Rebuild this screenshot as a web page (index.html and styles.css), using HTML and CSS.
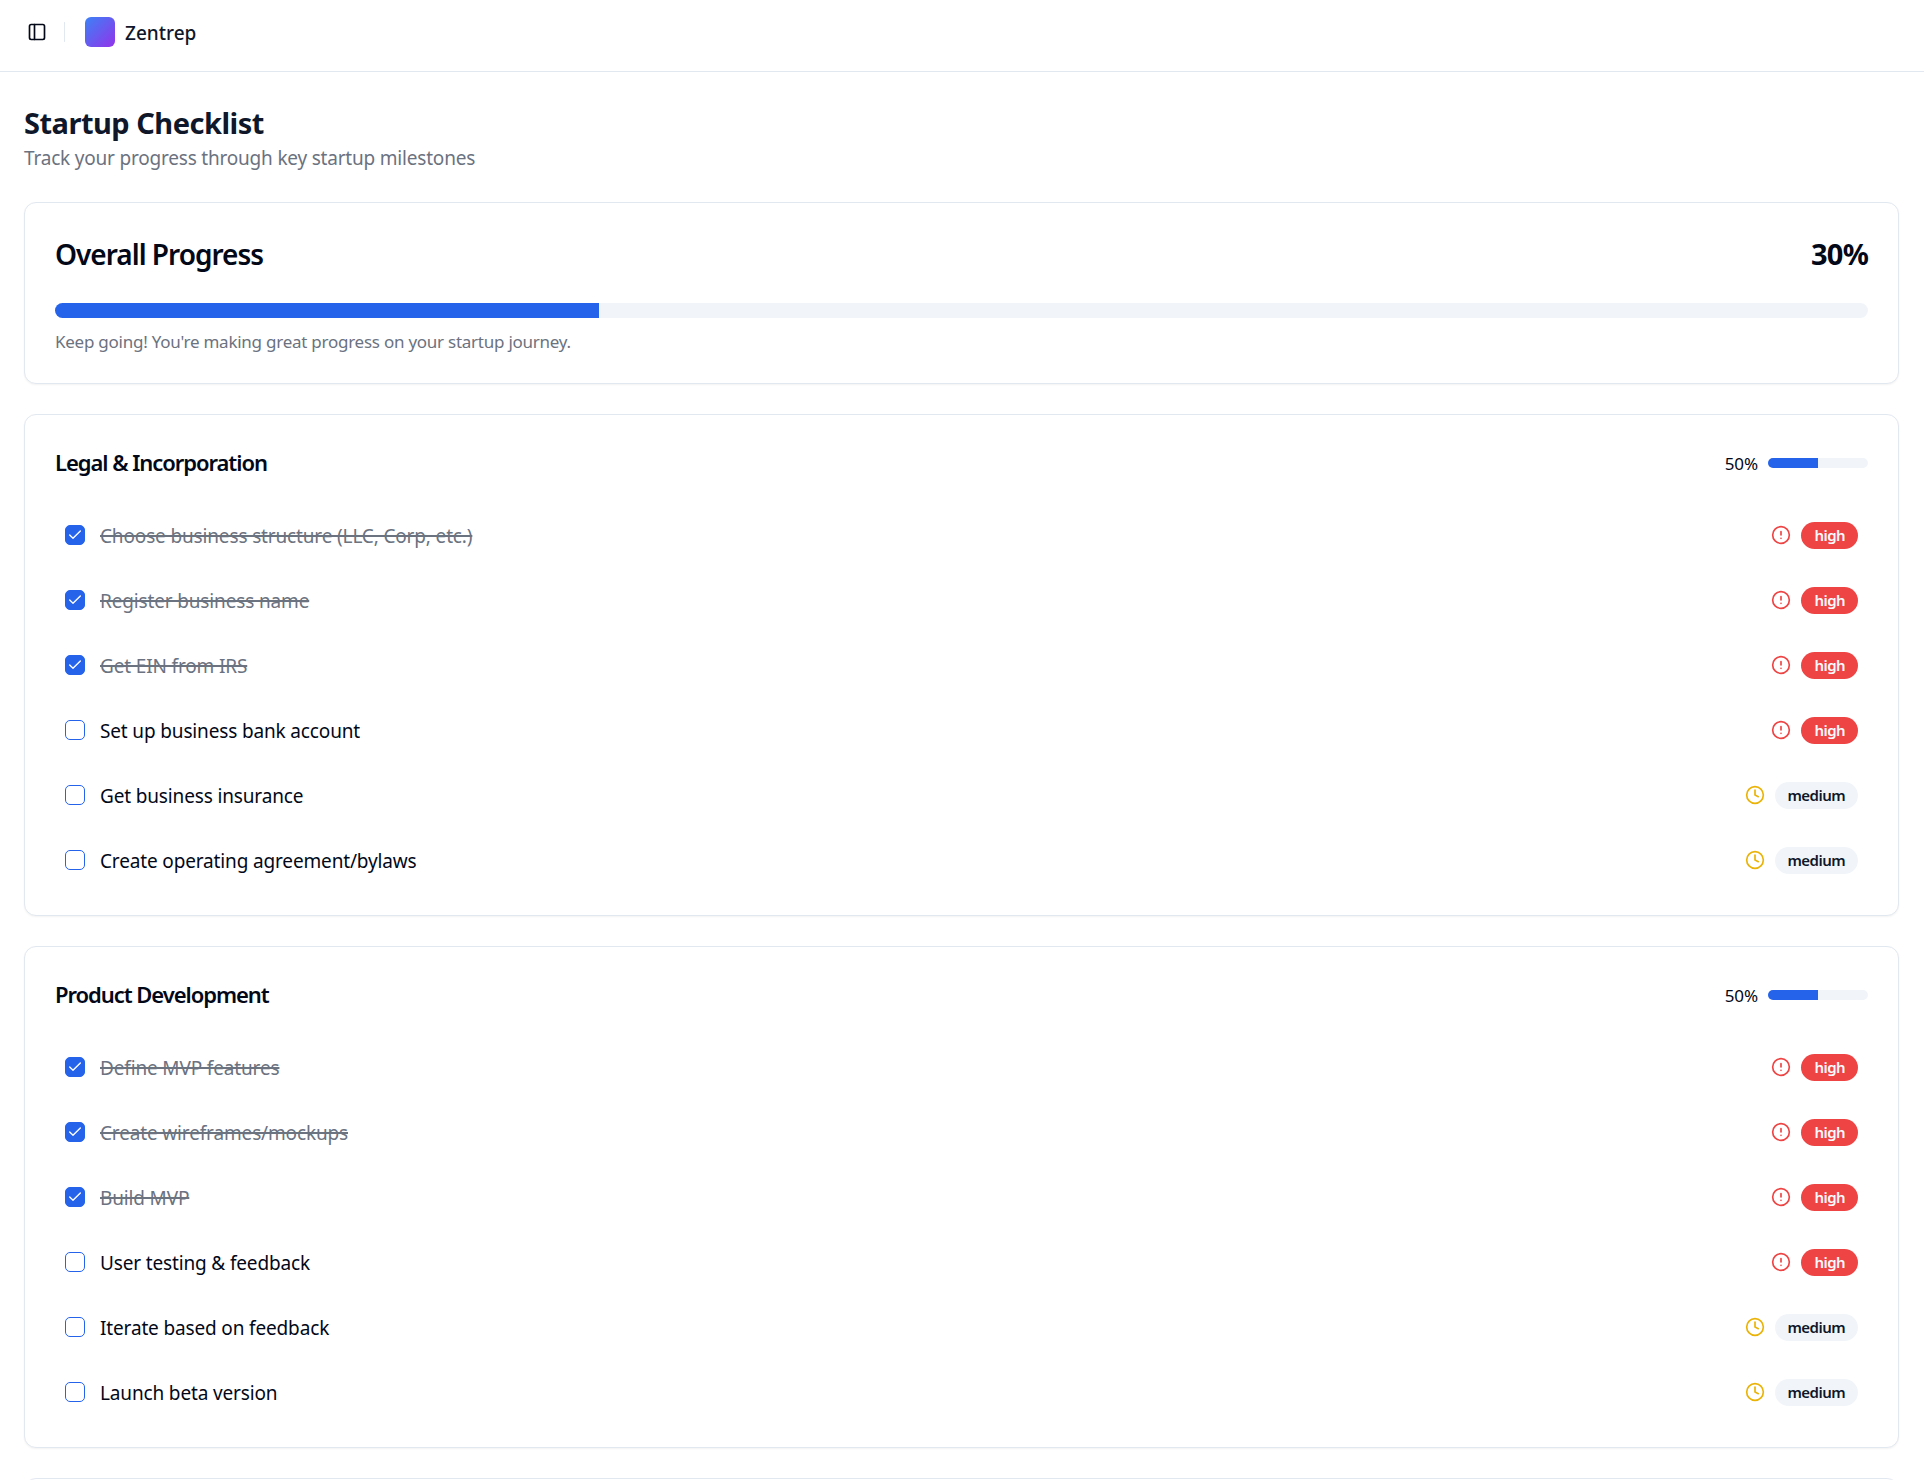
FILE: index.html
```html
<!DOCTYPE html>
<html lang="en">
<head>
  <meta charset="UTF-8" />
  <title>Zentrep - Startup Checklist</title>
  <meta name="viewport" content="width=device-width, initial-scale=1.0" />
  <link rel="stylesheet" href="styles.css">
</head>
<body>

<svg class="sprites" width="0" height="0" aria-hidden="true">
  <symbol id="icon-alert" viewBox="0 0 24 24"><circle cx="12" cy="12" r="10"/><line x1="12" y1="8" x2="12" y2="12"/><line x1="12" y1="16" x2="12.01" y2="16"/></symbol>
  <symbol id="icon-clock" viewBox="0 0 24 24"><circle cx="12" cy="12" r="10"/><polyline points="12 6 12 12 16 14"/></symbol>
  <symbol id="icon-check" viewBox="0 0 24 24"><path d="M20 6 9 17l-5-5"/></symbol>
</svg>

<header class="topbar">
  <button class="panel-toggle" aria-label="Toggle sidebar">
    <svg class="icon" viewBox="0 0 24 24"><rect x="3" y="3" width="18" height="18" rx="2"/><path d="M9 3v18"/></svg>
  </button>
  <span class="topbar-sep"></span>
  <span class="logo"></span>
  <span class="brand">Zentrep</span>
</header>

<main>
  <h1>Startup Checklist</h1>
  <p class="subtitle">Track your progress through key startup milestones</p>

  <section class="card overall">
    <div class="overall-head">
      <h2>Overall Progress</h2>
      <span class="overall-value">30%</span>
    </div>
    <div class="bar bar-large"><div class="bar-fill" style="width:30%"></div></div>
    <p class="overall-note">Keep going! You're making great progress on your startup journey.</p>
  </section>

  <section class="card">
    <div class="group-head">
      <h3>Legal &amp; Incorporation</h3>
      <div class="group-progress">
        <span>50%</span>
        <div class="bar bar-small"><div class="bar-fill" style="width:50%"></div></div>
      </div>
    </div>
    <ul class="tasks">
      <li class="task done"><span class="checkbox"><svg viewBox="0 0 24 24"><use href="#icon-check"/></svg></span><span class="task-name">Choose business structure (LLC, Corp, etc.)</span><svg class="priority-icon red"><use href="#icon-alert"/></svg><span class="pill high">high</span></li>
      <li class="task done"><span class="checkbox"><svg viewBox="0 0 24 24"><use href="#icon-check"/></svg></span><span class="task-name">Register business name</span><svg class="priority-icon red"><use href="#icon-alert"/></svg><span class="pill high">high</span></li>
      <li class="task done"><span class="checkbox"><svg viewBox="0 0 24 24"><use href="#icon-check"/></svg></span><span class="task-name">Get EIN from IRS</span><svg class="priority-icon red"><use href="#icon-alert"/></svg><span class="pill high">high</span></li>
      <li class="task"><span class="checkbox"></span><span class="task-name">Set up business bank account</span><svg class="priority-icon red"><use href="#icon-alert"/></svg><span class="pill high">high</span></li>
      <li class="task"><span class="checkbox"></span><span class="task-name">Get business insurance</span><svg class="priority-icon amber"><use href="#icon-clock"/></svg><span class="pill medium">medium</span></li>
      <li class="task"><span class="checkbox"></span><span class="task-name">Create operating agreement/bylaws</span><svg class="priority-icon amber"><use href="#icon-clock"/></svg><span class="pill medium">medium</span></li>
    </ul>
  </section>

  <section class="card">
    <div class="group-head">
      <h3>Product Development</h3>
      <div class="group-progress">
        <span>50%</span>
        <div class="bar bar-small"><div class="bar-fill" style="width:50%"></div></div>
      </div>
    </div>
    <ul class="tasks">
      <li class="task done"><span class="checkbox"><svg viewBox="0 0 24 24"><use href="#icon-check"/></svg></span><span class="task-name">Define MVP features</span><svg class="priority-icon red"><use href="#icon-alert"/></svg><span class="pill high">high</span></li>
      <li class="task done"><span class="checkbox"><svg viewBox="0 0 24 24"><use href="#icon-check"/></svg></span><span class="task-name">Create wireframes/mockups</span><svg class="priority-icon red"><use href="#icon-alert"/></svg><span class="pill high">high</span></li>
      <li class="task done"><span class="checkbox"><svg viewBox="0 0 24 24"><use href="#icon-check"/></svg></span><span class="task-name">Build MVP</span><svg class="priority-icon red"><use href="#icon-alert"/></svg><span class="pill high">high</span></li>
      <li class="task"><span class="checkbox"></span><span class="task-name">User testing &amp; feedback</span><svg class="priority-icon red"><use href="#icon-alert"/></svg><span class="pill high">high</span></li>
      <li class="task"><span class="checkbox"></span><span class="task-name">Iterate based on feedback</span><svg class="priority-icon amber"><use href="#icon-clock"/></svg><span class="pill medium">medium</span></li>
      <li class="task"><span class="checkbox"></span><span class="task-name">Launch beta version</span><svg class="priority-icon amber"><use href="#icon-clock"/></svg><span class="pill medium">medium</span></li>
    </ul>
  </section>

  <section class="card next-card"></section>
</main>

</body>
</html>
```

FILE: styles.css
```css
html, body {
  height: 1480px;
  overflow: hidden;
}
body {
  margin: 0;
  font-family: "Noto Sans", sans-serif;
  background: #fff;
  color: #020817;
}
h1, h2, h3, p, ul {
  margin: 0;
  padding: 0;
}
.sprites {
  position: absolute;
}
.topbar {
  height: 63px;
  border-bottom: 1px solid #e2e8f0;
  display: flex;
  align-items: center;
  padding: 0 0 8px 23px;
}
.panel-toggle {
  width: 28px;
  height: 28px;
  padding: 0;
  border: none;
  background: none;
  display: flex;
  align-items: center;
  justify-content: center;
  margin-right: 13px;
}
.icon {
  width: 20px;
  height: 20px;
  fill: none;
  stroke: #020817;
  stroke-width: 2;
  stroke-linecap: round;
  stroke-linejoin: round;
}
.topbar-sep {
  width: 1px;
  height: 20px;
  background: #e2e8f0;
  margin-right: 20px;
}
.logo {
  width: 30px;
  height: 30px;
  border-radius: 6px;
  background: linear-gradient(135deg, #3b82f6, #9333ea);
  margin-right: 10px;
}
.brand {
  font-size: 19px;
  font-weight: 500;
  color: #0f172a;
  padding-top: 2px;
}
main {
  padding: 32px 25px 0 24px;
}
h1 {
  font-size: 29px;
  line-height: 38px;
  font-weight: 700;
  letter-spacing: -0.5px;
  color: #0f172a;
  margin-bottom: 2px;
}
.subtitle {
  font-size: 19px;
  line-height: 28px;
  letter-spacing: -0.2px;
  color: #6b7280;
  margin-bottom: 30px;
}
.card {
  border: 1px solid #e2e8f0;
  border-radius: 12px;
  background: #fff;
  padding: 30px 30px 22.5px;
  margin-bottom: 30px;
  box-shadow: 0 1px 2px rgba(0,0,0,0.05);
}
.overall {
  height: 182px;
  box-sizing: border-box;
}
.overall-head {
  display: flex;
  justify-content: space-between;
  align-items: center;
  height: 42px;
  margin-bottom: 28px;
}
h2 {
  font-size: 28px;
  font-weight: 600;
  letter-spacing: -1px;
  color: #020817;
}
.overall-value {
  font-size: 29px;
  font-weight: 700;
  letter-spacing: -0.8px;
  padding-bottom: 2px;
}
.bar {
  background: #f1f5f9;
  border-radius: 999px;
  overflow: hidden;
}
.bar-fill {
  height: 100%;
  background: #2563eb;
}
.bar-large {
  height: 15px;
}
.overall-note {
  font-size: 17px;
  line-height: 26px;
  color: #6b7280;
  letter-spacing: -0.25px;
  margin-top: 11px;
}
.group-head {
  display: flex;
  justify-content: space-between;
  align-items: center;
  height: 36px;
  margin-bottom: 21.5px;
}
h3 {
  font-size: 22px;
  font-weight: 600;
  letter-spacing: -1.05px;
  color: #020817;
  padding-bottom: 2px;
}
.group-progress {
  display: flex;
  align-items: center;
  gap: 10px;
  font-size: 17px;
  letter-spacing: -0.1px;
}
.bar-small {
  width: 100px;
  height: 10px;
}
.tasks {
  list-style: none;
}
.task {
  height: 65px;
  display: flex;
  align-items: center;
  padding: 0 10px;
}
.checkbox {
  width: 20px;
  height: 20px;
  box-sizing: border-box;
  border: 1px solid #2563eb;
  border-radius: 5px;
  margin-right: 15px;
  flex: none;
  display: flex;
  align-items: center;
  justify-content: center;
}
.checkbox svg {
  width: 16px;
  height: 16px;
  fill: none;
  stroke: #fff;
  stroke-width: 2;
  stroke-linecap: round;
  stroke-linejoin: round;
}
.task-name {
  flex: 1;
  font-size: 19px;
  letter-spacing: -0.15px;
  padding-top: 2px;
}
.done .checkbox {
  background: #2563eb;
}
.done .task-name {
  color: #6b7280;
  text-decoration: line-through;
  text-decoration-thickness: 2px;
}
.priority-icon {
  width: 20px;
  height: 20px;
  margin-right: 10px;
  fill: none;
  stroke-width: 2;
  stroke-linecap: round;
  stroke-linejoin: round;
}
.red {
  stroke: #ef4444;
}
.amber {
  stroke: #eab308;
}
.pill {
  height: 27px;
  box-sizing: border-box;
  border-radius: 999px;
  padding: 0 13px;
  font-size: 15px;
  font-weight: 600;
  letter-spacing: -0.55px;
  display: flex;
  align-items: center;
}
.high {
  background: #ef4444;
  color: #f8fafc;
}
.medium {
  background: #f1f5f9;
  color: #0f172a;
}
.next-card {
  height: 300px;
}
```
